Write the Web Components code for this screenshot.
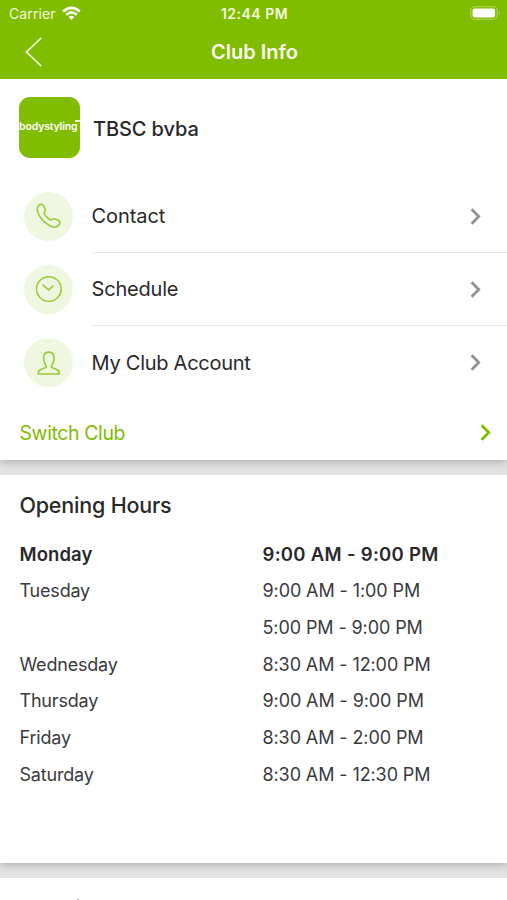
<!DOCTYPE html>
<html lang="en">
<head>
<meta charset="utf-8">
<title>Club Info</title>
<style>
    html {
        --primary: #80bc00;
        --tint: #eff7e1;
        --text: #29292b;
        --line: #e6e6e6;
    }

    body {
        margin: 0;
        height: 900px;
        overflow: hidden;
        background: #e2e2e2;
        color: var(--text);
        font-family: Inter, "Liberation Sans", sans-serif;
    }
</style>
</head>
<body>
<club-page>
    <status-bar slot="header" carrier="Carrier" time="12:44 PM"></status-bar>
    <nav-bar slot="header">Club Info</nav-bar>
    <page-card style="height: 381px">
        <club-header logo="bodystyling">TBSC bvba</club-header>
        <menu-row icon="phone" spacing="-0.1px">Contact</menu-row>
        <menu-row icon="clock" spacing="-0.2px">Schedule</menu-row>
        <menu-row icon="person" spacing="-0.27px" last>My Club Account</menu-row>
        <switch-link>Switch Club</switch-link>
    </page-card>
    <page-card style="height: 388px">
        <opening-hours>Opening Hours</opening-hours>
    </page-card>
    <page-card style="height: 22px" peek></page-card>
</club-page>

<script>
class ClubPage extends HTMLElement {
    constructor() {
        super();
        this.attachShadow({ mode: 'open' });
        this.shadowRoot.innerHTML = `
        <style>
:host {
    display: block;
    height: 900px;
    overflow: hidden;
}
header {
    height: 79px;
    background: var(--primary);
    color: white;
}
main {
    display: flex;
    flex-direction: column;
    gap: 15px;
}
        </style>
        <header><slot name="header"></slot></header>
        <main><slot></slot></main>`;
    }
}

class StatusBar extends HTMLElement {
    connectedCallback() {
        this.attachShadow({ mode: 'open' });
        this.shadowRoot.innerHTML = `
        <style>
:host {
    display: grid;
    grid-template-columns: 1fr auto 1fr;
    align-items: center;
    height: 27px;
    padding: 0 6px 0 9px;
    color: #f3fadf;
}
.left {
    display: flex;
    align-items: center;
    gap: 6px;
    font-size: 14px;
    letter-spacing: 0.1px;
}
.time {
    font-size: 14px;
    font-weight: 600;
    letter-spacing: 0.5px;
    margin-right: 1px;
}
.battery {
    justify-self: end;
    margin-top: -1px;
}
svg {
    display: block;
}
        </style>
        <div class="left">
            <span>${this.getAttribute('carrier')}</span>
            <svg width="19" height="15" viewBox="0 0 19 15" fill="none" stroke="white" stroke-width="2.6">
                <path d="M1.2 5.4Q9.5 -1.8 17.8 5.4"/>
                <path d="M4.2 8.7Q9.5 4 14.8 8.7"/>
                <path d="M6.5 11.1Q9.5 8.5 12.5 11.1L9.5 14.1Z" fill="white" stroke="none"/>
            </svg>
        </div>
        <span class="time">${this.getAttribute('time')}</span>
        <svg class="battery" width="31" height="14" viewBox="0 0 31 14">
            <rect x="0.7" y="0.7" width="26.6" height="12.6" rx="4" fill="none" stroke="#a9d24d" stroke-width="1.2"/>
            <rect x="2.5" y="2.5" width="22.6" height="9" rx="2.2" fill="white"/>
            <path d="M28.8 4.8Q31.2 7 28.8 9.2Z" fill="#a9d24d"/>
        </svg>`;
    }
}

class NavBar extends HTMLElement {
    constructor() {
        super();
        this.attachShadow({ mode: 'open' });
        this.shadowRoot.innerHTML = `
        <style>
:host {
    display: grid;
    grid-template-columns: 60px 1fr 60px;
    align-items: center;
    height: 50px;
    font-size: 20px;
    font-weight: 600;
    letter-spacing: 0;
    color: #fafdf2;
    text-align: center;
}
svg {
    display: block;
    margin-left: 25px;
}
span {
    padding-left: 2px;
}
        </style>
        <svg width="18" height="30" viewBox="0 0 18 30" fill="none" stroke="#f3fadf" stroke-width="1.7">
            <path d="M16.2 0.8L1.5 15L16.2 29.2"/>
        </svg>
        <span><slot></slot></span>`;
    }
}

class PageCard extends HTMLElement {
    constructor() {
        super();
        this.attachShadow({ mode: 'open' });
        this.shadowRoot.innerHTML = `
        <style>
:host {
    display: block;
    flex: none;
    box-sizing: border-box;
    background: white;
    box-shadow: 0 1px 9px rgba(0, 0, 0, 0.28);
    clip-path: inset(0 0 -15px 0);
}
/* top of the next heading, just above the fold */
:host([peek])::after {
    content: "";
    display: block;
    width: 2px;
    height: 1px;
    margin-left: 77px;
    transform: translateY(21px);
    background: #aaa;
}
        </style>
        <slot></slot>`;
    }
}

class ClubHeader extends HTMLElement {
    connectedCallback() {
        this.attachShadow({ mode: 'open' });
        this.shadowRoot.innerHTML = `
        <style>
:host {
    display: flex;
    align-items: center;
    gap: 13px;
    height: 97px;
    padding: 0 0 3.6px 19px;
    font-size: 20px;
    font-weight: 500;
    letter-spacing: -0.1px;
}
.logo {
    position: relative;
    display: flex;
    align-items: center;
    width: 61px;
    height: 61px;
    border-radius: 11px;
    background: var(--primary);
    color: white;
    font-size: 10.5px;
    font-weight: 600;
    letter-spacing: -0.15px;
    overflow: hidden;
}
.mark {
    position: absolute;
    top: 23px;
    right: 0;
    width: 5px;
    height: 1.5px;
    background: #e9f4cf;
}
.name {
    margin-top: -2px;
}
.title {
    padding-top: 2px;
}
        </style>
        <div class="logo"><span class="name">${this.getAttribute('logo')}</span><span class="mark"></span></div>
        <span class="title"><slot></slot></span>`;
    }
}

class MenuRow extends HTMLElement {
    icons = {
        phone: '<path d="M2.2 3.1C3.3 1.2 5.9 .6 7.3 2.4L9.2 6.2C10 8 7.8 9 8.1 10.4C8.5 12.2 12.8 16.4 14.8 17.1C16.2 17.5 17 15.2 18.8 15.8L22.5 17.5C24.5 18.7 24.2 20.9 22.6 22.5C20.2 24.9 16.2 24.3 12.7 22C8.1 19 3.8 14.3 2 9.7C1.1 7.4 1 5 2.2 3.1Z"/>',
        clock: '<circle cx="12.8" cy="13" r="12.3"/><path d="M6.5 8.6L12.6 13.9L17.4 9.6"/>',
        person: '<path d="M2.3 24H23.3C23.5 21.5 22.8 20.5 20.7 19.6L16.4 17.8C15.2 17.2 15.1 16.3 15.9 15.2C17.7 12.6 18.3 9.9 17.9 6.9C17.5 3.7 15.7 2.1 12.8 2.1C9.9 2.1 8 3.7 7.6 6.9C7.2 9.9 8 12.6 9.8 15.2C10.6 16.3 10.4 17.2 9.2 17.8L4.9 19.6C2.8 20.5 2.1 21.5 2.3 24Z"/>',
    }

    connectedCallback() {
        this.attachShadow({ mode: 'open' });
        this.shadowRoot.innerHTML = `
        <style>
:host {
    display: flex;
    align-items: center;
    height: 73.2px;
    padding-left: 24px;
    font-size: 20px;
    letter-spacing: ${this.getAttribute('spacing')};
}
.icon {
    display: grid;
    place-items: center;
    width: 49px;
    height: 49px;
    border-radius: 50%;
    background: var(--tint);
    margin-right: 18.6px;
}
.icon svg {
    stroke: #99ca38;
}
.label {
    flex: 1;
    display: flex;
    align-items: center;
    justify-content: space-between;
    box-sizing: border-box;
    height: 100%;
    padding: 1px 26.5px 0 0;
    border-bottom: 1px solid var(--line);
}
:host([last]) .label {
    border-color: transparent;
}
        </style>
        <div class="icon">
            <svg width="26" height="26" viewBox="0 0 26 26" fill="none" stroke-width="1.6" stroke-linejoin="round">${this.icons[this.getAttribute('icon')]}</svg>
        </div>
        <div class="label">
            <span><slot></slot></span>
            <svg width="11" height="17" viewBox="0 0 11 17" fill="none" stroke="#929292" stroke-width="2.8"><path d="M1.6 1.3L8.7 8.5L1.6 15.7"/></svg>
        </div>`;
    }
}

class SwitchLink extends HTMLElement {
    constructor() {
        super();
        this.attachShadow({ mode: 'open' });
        this.shadowRoot.innerHTML = `
        <style>
:host {
    display: flex;
    align-items: center;
    justify-content: space-between;
    height: 67px;
    padding: 0 16.5px 0 19.5px;
    color: var(--primary);
    font-size: 19.5px;
    letter-spacing: -0.4px;
}
        </style>
        <span><slot></slot></span>
        <svg width="11" height="17" viewBox="0 0 11 17" fill="none" stroke="#80bc00" stroke-width="2.8"><path d="M1.6 1.3L8.7 8.5L1.6 15.7"/></svg>`;
    }
}

class OpeningHours extends HTMLElement {
    attrs = {
        hours: [
            { day: 'Monday', time: '9:00 AM - 9:00 PM', today: true },
            { day: 'Tuesday', time: '9:00 AM - 1:00 PM' },
            { day: '', time: '5:00 PM - 9:00 PM' },
            { day: 'Wednesday', time: '8:30 AM - 12:00 PM' },
            { day: 'Thursday', time: '9:00 AM - 9:00 PM' },
            { day: 'Friday', time: '8:30 AM - 2:00 PM' },
            { day: 'Saturday', time: '8:30 AM - 12:30 PM' },
        ],
    }

    connectedCallback() {
        this.attachShadow({ mode: 'open' });
        this.shadowRoot.innerHTML = `
        <style>
:host {
    display: block;
    padding: 15px 0 0 19.5px;
}
h2 {
    margin: 0;
    height: 46px;
    line-height: 30px;
    font-size: 21.5px;
    font-weight: 500;
    letter-spacing: -0.2px;
}
.row {
    display: grid;
    grid-template-columns: 243px 1fr;
    align-items: center;
    height: 36.67px;
    font-size: 18px;
    letter-spacing: -0.1px;
    color: #3a3a3c;
}
.day {
    letter-spacing: -0.2px;
}
.today {
    font-weight: 600;
    font-size: 18.5px;
    letter-spacing: 0.3px;
    color: var(--text);
}
.today .day {
    letter-spacing: 0.1px;
}
        </style>
        <h2><slot></slot></h2>
        ${this.attrs.hours.map((h) => `
            <div class="row ${h.today ? 'today' : ''}"><span class="day">${h.day}</span><span>${h.time}</span></div>
        `).join('')}`;
    }
}

customElements.define('club-page', ClubPage);
customElements.define('status-bar', StatusBar);
customElements.define('nav-bar', NavBar);
customElements.define('page-card', PageCard);
customElements.define('club-header', ClubHeader);
customElements.define('menu-row', MenuRow);
customElements.define('switch-link', SwitchLink);
customElements.define('opening-hours', OpeningHours);
</script>
</body>
</html>
